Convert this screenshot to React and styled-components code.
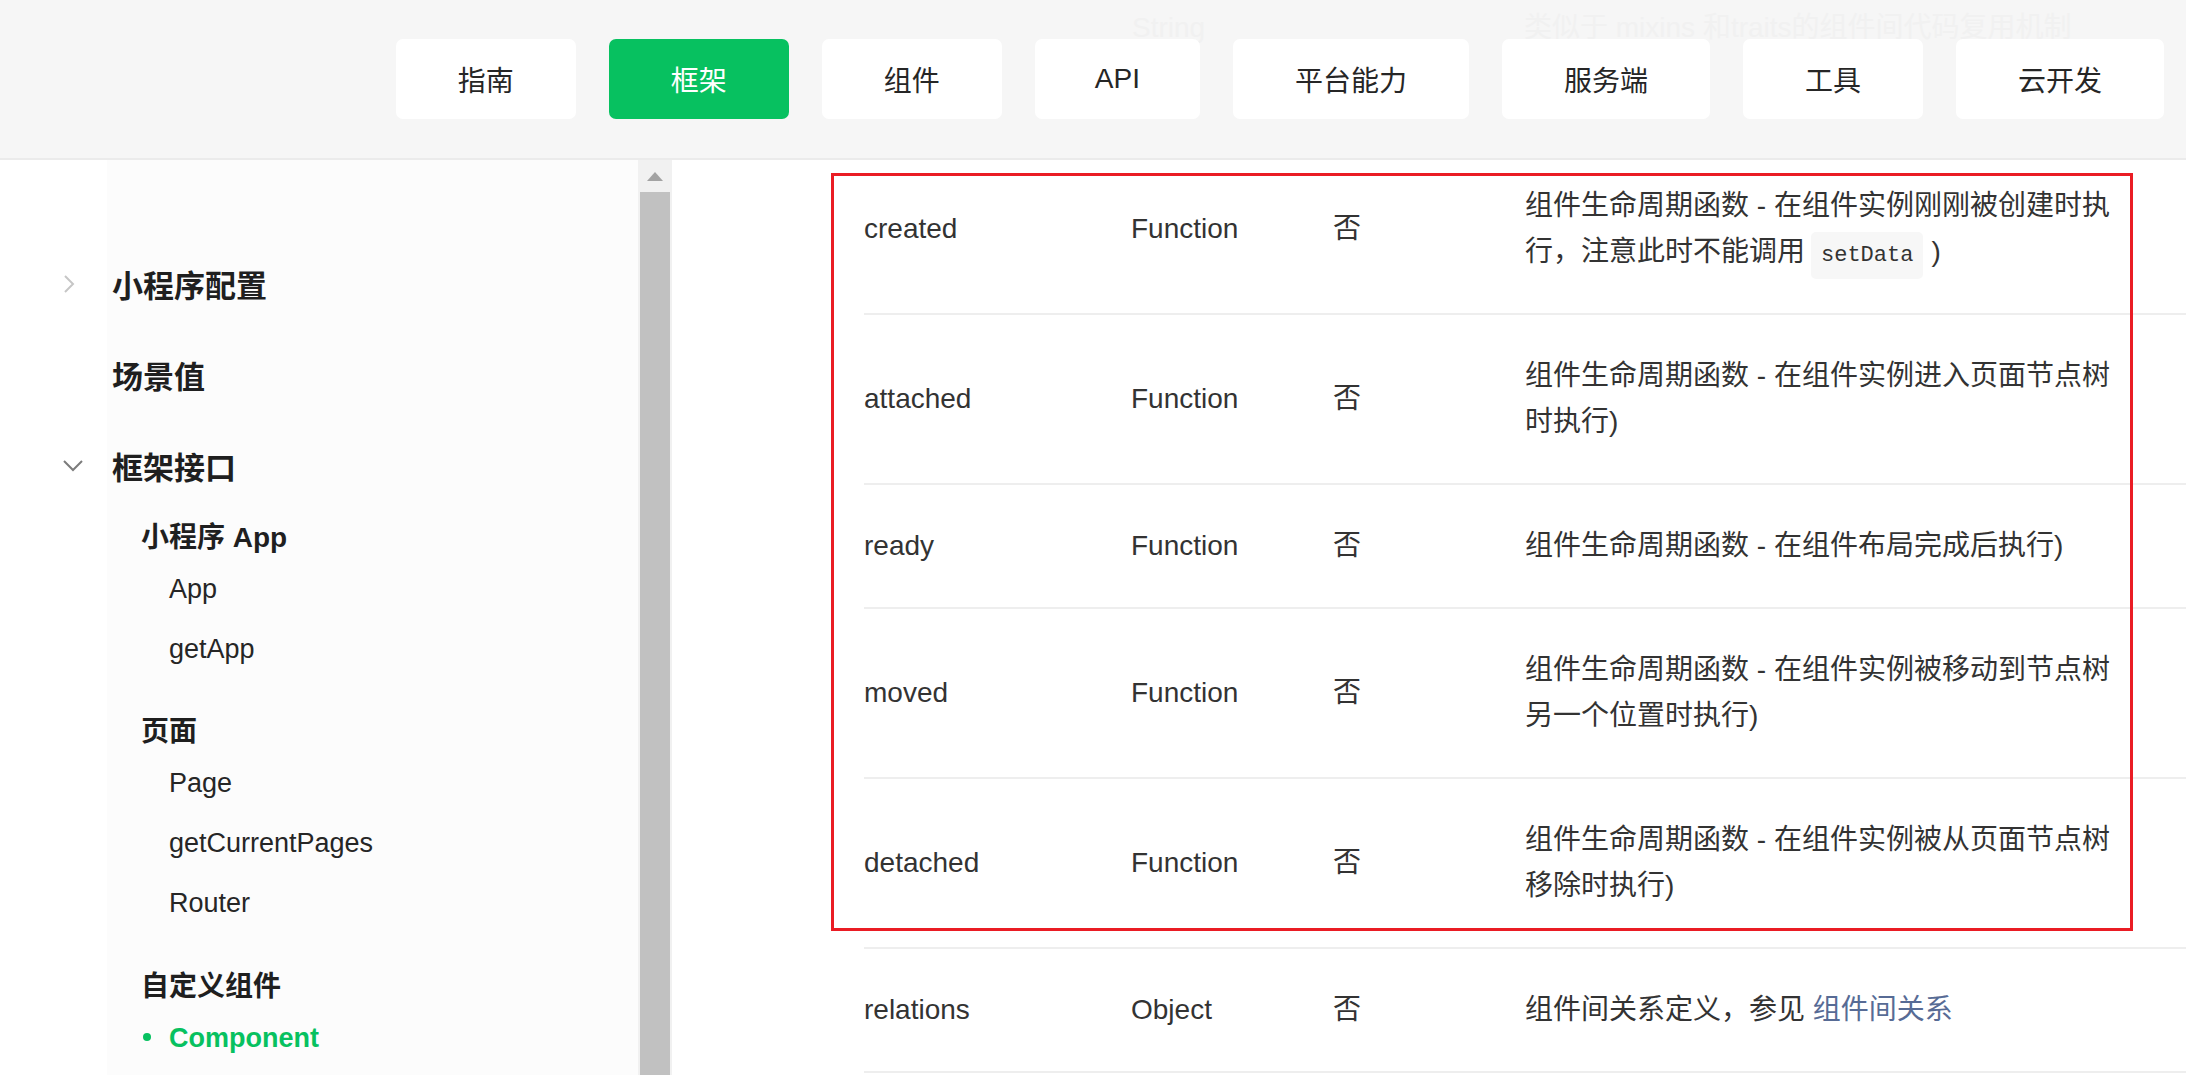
import styled, { createGlobalStyle } from "styled-components";

const GlobalStyle = createGlobalStyle`
  html, body {
    margin: 0;
    padding: 0;
    height: 100%;
    overflow: hidden;
    background: #ffffff;
  }
  body {
    font-family: "Liberation Sans", "Noto Sans CJK SC", sans-serif;
    color: #333333;
  }
  #root {
    height: 100%;
  }
`;

const Page = styled.div`
  height: 100vh;
  display: flex;
  flex-direction: column;
`;

const Header = styled.header`
  position: relative;
  height: 158px;
  flex-shrink: 0;
  background: #f6f6f6;
  border-bottom: 2px solid #ebebeb;
  display: flex;
  align-items: center;
  justify-content: flex-end;
  padding-right: 22px;
  overflow: hidden;
`;

// rows of the scrolled table that show faintly through the header
const GhostText = styled.span`
  position: absolute;
  top: 8px;
  left: ${(p) => p.$left}px;
  font-size: 28px;
  line-height: 40px;
  color: #f1f1f1;
  white-space: nowrap;
`;

const Nav = styled.nav`
  position: relative;
  display: flex;
  gap: 33px;
`;

const NavButton = styled.a`
  height: 80px;
  padding: 0 ${(p) => (p.$narrow ? 60 : 62)}px;
  display: flex;
  align-items: center;
  justify-content: center;
  border-radius: 7px;
  font-size: 28px;
  background: ${(p) => (p.$active ? "#07c160" : "#ffffff")};
  color: ${(p) => (p.$active ? "#ffffff" : "#262626")};
  cursor: pointer;
`;

const Body = styled.div`
  flex: 1;
  display: flex;
  min-height: 0;
`;

const Sidebar = styled.aside`
  width: 638px;
  flex-shrink: 0;
  background: linear-gradient(to right, #ffffff 107px, #fcfcfc 107px);
  padding-top: 78px;
  box-sizing: border-box;
`;

const TopItem = styled.div`
  height: 91px;
  display: flex;
  align-items: center;
  padding-left: 62px;
  font-size: 31px;
  font-weight: 700;
  color: #1f1f1f;
`;

const Arrow = styled.span`
  width: 50px;
  display: flex;
  align-items: center;
`;

const GroupTitle = styled.div`
  height: 48px;
  margin-top: ${(p) => p.$gap || 0}px;
  display: flex;
  align-items: center;
  padding-left: 141px;
  font-size: 28px;
  font-weight: 700;
  color: #1f1f1f;
`;

const Leaf = styled.div`
  position: relative;
  height: 60px;
  display: flex;
  align-items: center;
  padding-left: 169px;
  font-size: 27px;
  color: ${(p) => (p.$active ? "#07c160" : "#262626")};
  font-weight: ${(p) => (p.$active ? 700 : 400)};
`;

const Dot = styled.span`
  position: absolute;
  left: 143px;
  top: 50%;
  width: 8px;
  height: 8px;
  margin-top: -5px;
  border-radius: 50%;
  background: #07c160;
`;

const Scrollbar = styled.div`
  width: 34px;
  flex-shrink: 0;
  background: #f1f1f1;
  display: flex;
  flex-direction: column;
  align-items: center;
`;

const ScrollArrow = styled.div`
  height: 32px;
  display: flex;
  align-items: center;
  justify-content: center;
`;

const Thumb = styled.div`
  width: 30px;
  flex: 1;
  background: #c1c1c1;
`;

const Main = styled.main`
  flex: 1;
  position: relative;
  overflow: hidden;
  background: #ffffff;
  padding-left: 192px;
`;

const Table = styled.table`
  width: 1400px;
  margin-top: -15px;
  border-collapse: collapse;
  font-size: 28px;
  line-height: 46px;
  color: #333333;
`;

const Row = styled.tr`
  border-bottom: 2px solid #eeeeee;
`;

const Cell = styled.td`
  width: ${(p) => p.$w}px;
  padding: 38px 0;
  vertical-align: middle;
  text-align: left;
`;

const DescCell = styled.td`
  padding: 38px 0;
  vertical-align: middle;
`;

const Desc = styled.div`
  width: 600px;
`;

const Code = styled.code`
  font-family: "Liberation Mono", monospace;
  font-size: 22px;
  line-height: 1;
  background: #f7f7f7;
  border-radius: 5px;
  padding: 11px 10px;
  margin: 0 8px 0 6px;
`;

const Link = styled.a`
  color: #576b95;
`;

const RedBox = styled.div`
  position: absolute;
  left: 159px;
  top: 13px;
  width: 1302px;
  height: 758px;
  box-sizing: border-box;
  border: 3px solid #ea1c24;
  pointer-events: none;
`;

const navItems = ["指南", "框架", "组件", "API", "平台能力", "服务端", "工具", "云开发"];

const rows = [
  { name: "created", type: "Function", desc: <>组件生命周期函数 - 在组件实例刚刚被创建时执行，注意此时不能调用<Code>setData</Code>)</> },
  { name: "attached", type: "Function", desc: "组件生命周期函数 - 在组件实例进入页面节点树时执行)" },
  { name: "ready", type: "Function", desc: "组件生命周期函数 - 在组件布局完成后执行)" },
  { name: "moved", type: "Function", desc: "组件生命周期函数 - 在组件实例被移动到节点树另一个位置时执行)" },
  { name: "detached", type: "Function", desc: "组件生命周期函数 - 在组件实例被从页面节点树移除时执行)" },
  { name: "relations", type: "Object", desc: <>组件间关系定义，参见 <Link>组件间关系</Link></> },
  { name: "externalClasses", type: "String Array", desc: "组件接受的外部样式类" },
];

function ChevronRight() {
  return (
    <svg width="14" height="20" viewBox="0 0 14 20">
      <polyline points="3,2 11,10 3,18" fill="none" stroke="#c6c6c6" strokeWidth="2" />
    </svg>
  );
}

function ChevronDown() {
  return (
    <svg width="22" height="14" viewBox="0 0 22 14">
      <polyline points="2,2 11,11 20,2" fill="none" stroke="#7c7c7c" strokeWidth="2" />
    </svg>
  );
}

export default function App() {
  return (
    <>
      <GlobalStyle />
      <Page>
        <Header>
          <GhostText $left={1132}>String</GhostText>
          <GhostText $left={1524}>类似于 mixins 和traits的组件间代码复用机制</GhostText>
          <Nav>
            {navItems.map((item) => (
              <NavButton key={item} $active={item === "框架"} $narrow={item === "API"}>
                {item}
              </NavButton>
            ))}
          </Nav>
        </Header>
        <Body>
          <Sidebar>
            <TopItem>
              <Arrow>
                <ChevronRight />
              </Arrow>
              小程序配置
            </TopItem>
            <TopItem>
              <Arrow />
              场景值
            </TopItem>
            <TopItem>
              <Arrow>
                <ChevronDown />
              </Arrow>
              框架接口
            </TopItem>
            <GroupTitle>小程序 App</GroupTitle>
            <Leaf>App</Leaf>
            <Leaf>getApp</Leaf>
            <GroupTitle $gap={26}>页面</GroupTitle>
            <Leaf>Page</Leaf>
            <Leaf>getCurrentPages</Leaf>
            <Leaf>Router</Leaf>
            <GroupTitle $gap={27}>自定义组件</GroupTitle>
            <Leaf $active>
              <Dot />
              Component
            </Leaf>
          </Sidebar>
          <Scrollbar>
            <ScrollArrow>
              <svg width="16" height="9" viewBox="0 0 16 9">
                <polygon points="8,0 16,9 0,9" fill="#a3a3a3" />
              </svg>
            </ScrollArrow>
            <Thumb />
          </Scrollbar>
          <Main>
            <Table>
              <tbody>
                {rows.map((r) => (
                  <Row key={r.name}>
                    <Cell $w={267}>{r.name}</Cell>
                    <Cell $w={202}>{r.type}</Cell>
                    <Cell $w={192}>否</Cell>
                    <DescCell>
                      <Desc>{r.desc}</Desc>
                    </DescCell>
                  </Row>
                ))}
              </tbody>
            </Table>
            <RedBox />
          </Main>
        </Body>
      </Page>
    </>
  );
}
